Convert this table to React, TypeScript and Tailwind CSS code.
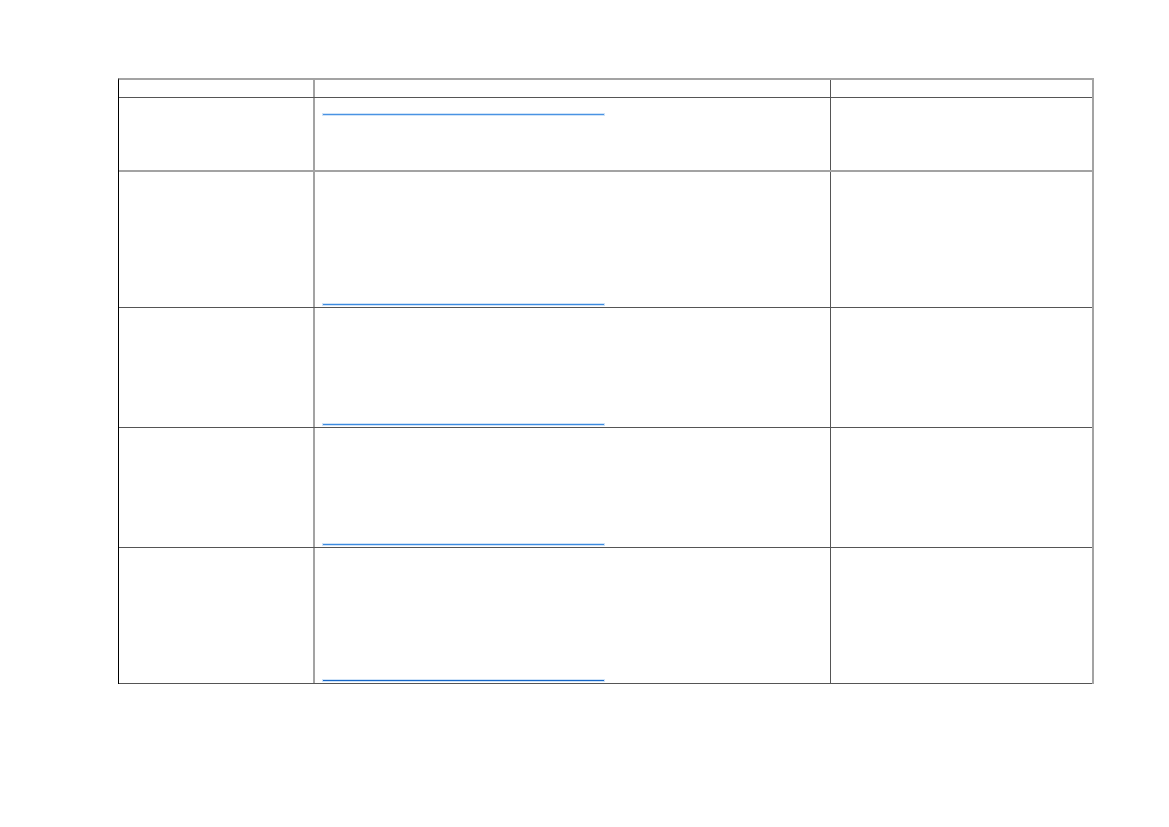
import React from 'react';

// empty table with link underlines, as rendered from a document page

interface RowSpec {
  height: string;
  bottom: string;
  linkTop: boolean;
  linkColor: string;
}

const rows: RowSpec[] = [
  { height: 'h-[74px]', bottom: 'border-[#a3a3a3] border-b-2', linkTop: true, linkColor: 'bg-[#4a93e3]' },
  { height: 'h-[136px]', bottom: 'border-[#555555] border-b', linkTop: false, linkColor: 'bg-[#3d8be0]' },
  { height: 'h-[120px]', bottom: 'border-[#555555] border-b', linkTop: false, linkColor: 'bg-[#3d8be0]' },
  { height: 'h-[120px]', bottom: 'border-[#555555] border-b', linkTop: false, linkColor: 'bg-[#3d8be0]' },
  { height: 'h-[136px]', bottom: 'border-[#555555] border-b', linkTop: false, linkColor: 'bg-[#1766c6]' },
];

const LinkLine = ({ color }: { color: string }) => (
  <div className={`ml-2 w-[281px] h-px ${color} shadow-[0_0_0_1px_#cfe3f8]`} />
);

const Row = ({ row }: { row: RowSpec }) => {
  return (
    <div className={`flex ${row.height} ${row.bottom}`}>
      <div className="w-[196px] shrink-0 border-r-2 border-[#a3a3a3]" />
      <div
        className={`w-[516px] shrink-0 border-r border-[#555555] flex flex-col ${
          row.linkTop ? 'justify-start pt-[16px]' : 'justify-end pb-[2px]'
        }`}
      >
        <LinkLine color={row.linkColor} />
      </div>
      <div className="flex-1" />
    </div>
  );
};

const App = () => {
  return (
    <div className="w-[1169px] h-[827px] bg-white pt-[78px] pl-[118px] font-['Liberation_Sans',sans-serif]">
      <div className="w-[976px] border-l border-l-black border-t-2 border-t-[#a3a3a3] border-r-2 border-r-[#a3a3a3]">
        {/* header row */}
        <div className="flex h-[18px] border-b border-[#555555]">
          <div className="w-[196px] shrink-0 border-r-2 border-[#a3a3a3]" />
          <div className="w-[516px] shrink-0 border-r border-[#555555]" />
          <div className="flex-1" />
        </div>

        {rows.map((row, i) => (
          <Row key={i} row={row} />
        ))}
      </div>
    </div>
  );
};

export default App;
